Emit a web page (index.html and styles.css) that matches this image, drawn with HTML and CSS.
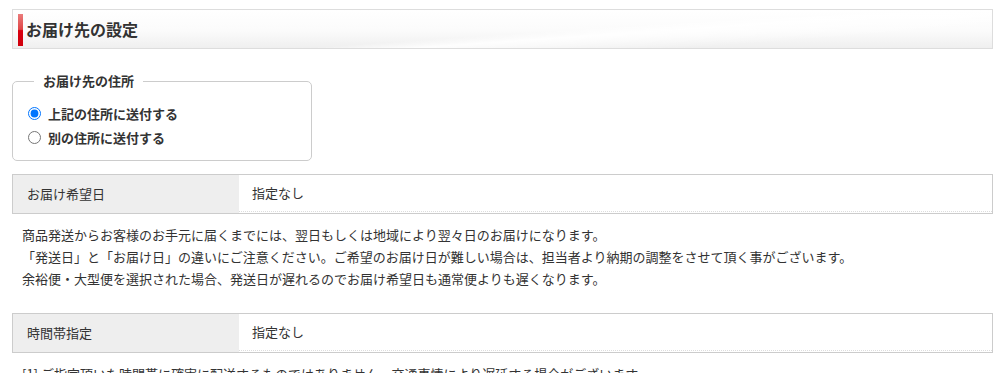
FILE: index.html
```html
<!DOCTYPE html>
<html lang="ja">
<head>
    <meta charset="UTF-8">
    <meta name="viewport" content="width=device-width, initial-scale=1.0">
    <title>お届け先の設定</title>
    <link rel="stylesheet" href="styles.css">
</head>
<body>
    <div class="container">
        <h2 class="heading"><span class="heading-mark"></span>お届け先の設定</h2>

        <fieldset class="address-box">
            <legend>お届け先の住所</legend>
            <label class="radio-row"><input type="radio" name="address" checked>上記の住所に送付する</label>
            <label class="radio-row"><input type="radio" name="address">別の住所に送付する</label>
        </fieldset>

        <div class="form-row">
            <div class="form-label">お届け希望日</div>
            <div class="form-value">指定なし</div>
        </div>
        <div class="note">
            <p>商品発送からお客様のお手元に届くまでには、翌日もしくは地域により翌々日のお届けになります。</p>
            <p>「発送日」と「お届け日」の違いにご注意ください。ご希望のお届け日が難しい場合は、担当者より納期の調整をさせて頂く事がございます。</p>
            <p>余裕便・大型便を選択された場合、発送日が遅れるのでお届け希望日も通常便よりも遅くなります。</p>
        </div>

        <div class="form-row">
            <div class="form-label">時間帯指定</div>
            <div class="form-value">指定なし</div>
        </div>
        <div class="note">
            <p>[1] ご指定頂いた時間帯に確実に配送するものではありません。交通事情により遅延する場合がございます。</p>
        </div>
    </div>
</body>
</html>
```

FILE: styles.css
```css
body {
    font-family: "Noto Sans CJK JP", "Noto Sans", sans-serif;
    font-size: 13px;
    color: #333;
    background-color: #fff;
    margin: 0;
    padding: 0;
}

.container {
    padding: 9px 12px 0 12px;
}

/* Section heading */
.heading {
    display: flex;
    align-items: center;
    height: 38px;
    margin: 0;
    border: 1px solid #ddd;
    background:
        linear-gradient(176deg, rgba(255, 255, 255, 0) 55%, rgba(255, 255, 255, 0.9) 62%, rgba(240, 240, 240, 0) 80%),
        linear-gradient(to bottom, #fff 0%, #fbfbfb 55%, #efefef 100%);
    font-size: 16px;
    font-weight: bold;
    color: #333;
}

.heading-mark {
    width: 5px;
    height: 32px;
    margin: 1px 3px 0 5px;
    background: linear-gradient(to bottom, #ea7c7c 0%, #e04545 48%, #d9000f 52%, #d0000c 100%);
}

/* Address radio group */
.address-box {
    box-sizing: border-box;
    width: 300px;
    margin: 22px 0 0 0;
    padding: 10px 10px 11px 10px;
    border: 1px solid #ccc;
    border-radius: 5px;
}

.address-box legend {
    margin-left: 11px;
    padding: 0 9px;
    line-height: 20px;
    font-weight: bold;
}

.radio-row {
    display: flex;
    align-items: center;
    height: 24px;
    font-weight: bold;
    cursor: pointer;
}

.radio-row input {
    width: 13px;
    height: 13px;
    margin: 0 7px 0 5px;
}

/* Form rows */
.form-row {
    display: flex;
    margin-top: 13px;
    border: 1px solid #ccc;
}

.form-label {
    width: 212px;
    padding-left: 14px;
    line-height: 38px;
    background-color: #eee;
}

.form-value {
    flex: 1;
    padding-left: 13px;
    line-height: 36px;
    margin-bottom: 1px;
    border-bottom: 1px dotted #ddd;
}

.note {
    padding: 10px;
}

.note p {
    margin: 0;
    line-height: 22px;
}

.note + .form-row {
    margin-top: 13px;
}
```
